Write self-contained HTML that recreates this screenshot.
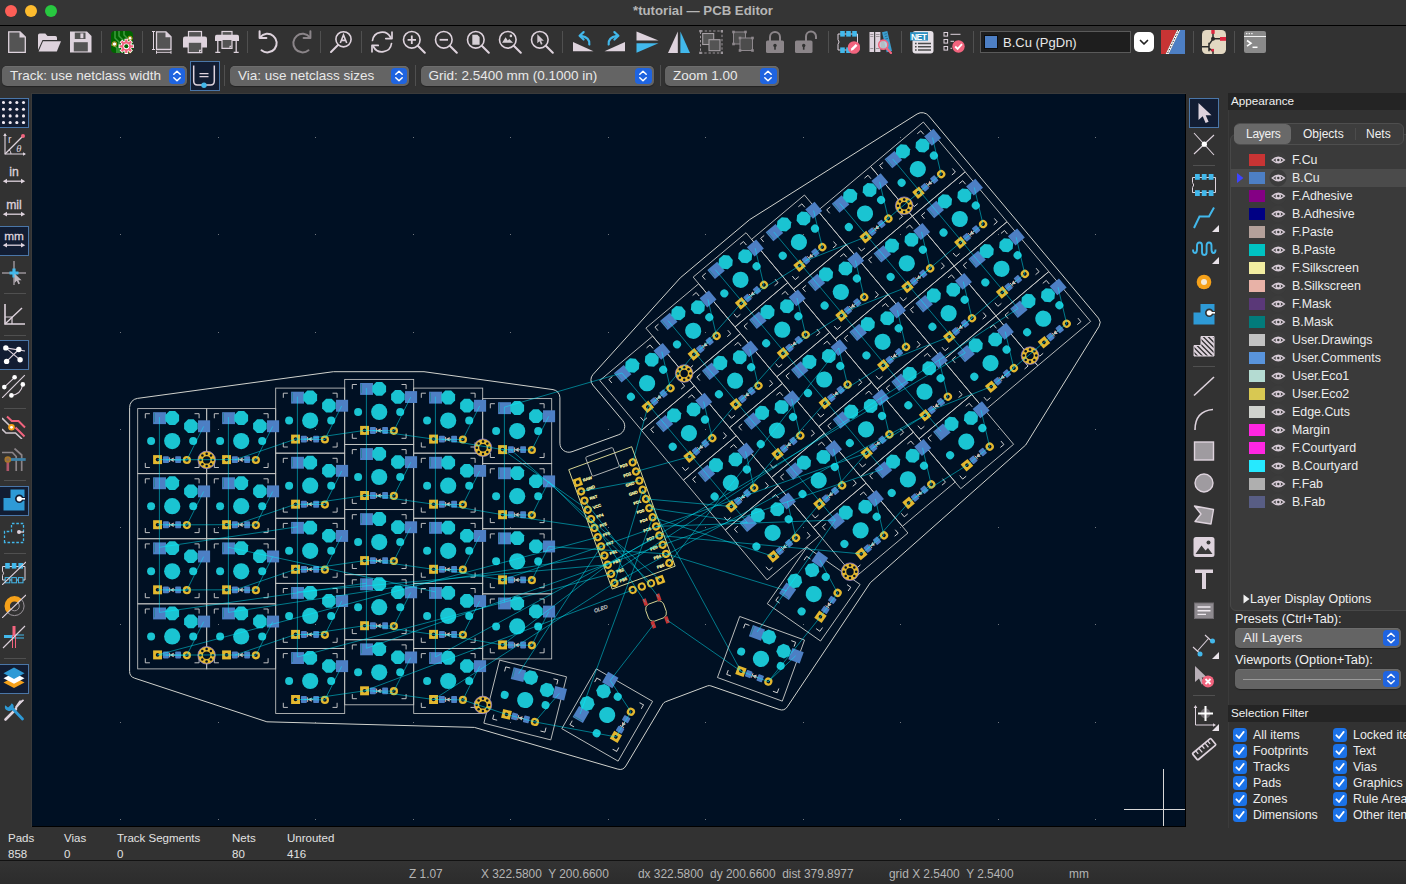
<!DOCTYPE html><html><head><meta charset="utf-8"><title>tutorial - PCB Editor</title><style>
*{box-sizing:border-box}
html,body{margin:0;padding:0}
body{width:1406px;height:884px;position:relative;overflow:hidden;background:#323232;font-family:"Liberation Sans",sans-serif;font-size:13px;color:#e4e4e4}
.abs,.ic,.vsep,.hsep,.selbox,.combo,.t{position:absolute}
.t{white-space:nowrap;line-height:1}
.vsep{width:1px;background:#505050}
.hsep{height:1px;background:#505050}
.selbox{background:#121d33;border:1.2px solid #4a76a8}
#title{left:0;top:0;width:1406px;height:26px;background:#353535;border-bottom:1.3px solid #000}
.tl{position:absolute;top:5px;width:12px;height:12px;border-radius:6px}
.combo{height:20px;border-radius:5px;background:#646464;box-shadow:0 .5px 0 #777 inset,0 .5px 1px #222;color:#e9e9e9;font-size:13.5px;line-height:20px;padding-left:8px;white-space:nowrap;overflow:hidden}
.step{position:absolute;right:2px;top:2px;width:16.2px;height:16px;border-radius:3.8px;background:#1f64e0}
.row{position:absolute;left:1231px;width:175px;height:18px}
.sw{position:absolute;left:17.6px;top:3.2px;width:16.5px;height:11.7px}
.ln{position:absolute;left:61px;top:2.5px;font-size:12.4px;line-height:13px;white-space:nowrap;color:#ececec}
.cb{position:absolute;width:14px;height:14px;border-radius:3.5px;background:#1b72e8}
.cl{position:absolute;font-size:12.4px;line-height:13px;white-space:nowrap;color:#ececec}
.hdr{position:absolute;left:1228px;width:178px;height:17px;background:#242424;color:#f0f0f0;font-size:11.7px;line-height:15.4px;padding-left:3px}
.st{position:absolute;font-size:11.5px;line-height:12px;color:#e2e2e2;white-space:nowrap}
.sb{position:absolute;font-size:11.9px;line-height:12px;color:#b4b4b4;white-space:pre;top:868px}
</style></head><body><div id="title" class="abs"><span class="tl" style="left:5px;background:#fe5f57"></span><span class="tl" style="left:25px;background:#febc2e"></span><span class="tl" style="left:45px;background:#28c840"></span><div class="t" style="left:0;width:1406px;text-align:center;top:4px;font-size:13.2px;font-weight:bold;color:#b6b6b6">*tutorial — PCB Editor</div></div><svg class="ic" style="left:5px;top:30px" width="24" height="24" viewBox="0 0 24 24"><path d="M3.7,1.8H15L20.3,7V22.3H3.7Z" fill="#545454" stroke="#ded3dd" stroke-width="1.3"/><path d="M14.5,1.8V7.5H20.3Z" fill="#ded3dd"/></svg><svg class="ic" style="left:36.8px;top:30px" width="24" height="24" viewBox="0 0 24 24"><path d="M1,20V5.2Q1,3.5 2.7,3.5H8.3L10.5,6H18.3Q20,6 20,7.7V10H5.5Z" fill="#ded3dd"/><path d="M6,11.2H24L19.8,21.5H1.6Z" fill="#ded3dd"/></svg><svg class="ic" style="left:68.8px;top:30px" width="24" height="24" viewBox="0 0 24 24"><path d="M1,1.5H18L22.5,6V22.5H1Z" fill="#ded3dd"/><rect x="5.8" y="2.6" width="10.7" height="6.4" fill="#545454"/><rect x="11.4" y="3.4" width="3" height="4.8" fill="#ded3dd"/><rect x="4.8" y="12.2" width="14" height="9.2" fill="#545454"/></svg><div class="vsep" style="left:101.0px;top:31px;height:22px"></div><svg class="ic" style="left:110.4px;top:30px" width="24" height="24" viewBox="0 0 24 24"><rect x="1" y="1" width="22" height="22" rx="4" fill="#006400"/><path d="M5,1V8L9,12V23M9,1V6L13,10V13M14,1V5L17,8M1,15H4L7,18V23" stroke="#3f9a3f" stroke-width="1.5" fill="none"/><circle cx="4.5" cy="14" r="1.7" fill="#fff"/><circle cx="4.5" cy="14" r="2.3" fill="none" stroke="#f0a030" stroke-width=".8"/><circle cx="20" cy="8.3" r="1.5" fill="#fff"/><circle cx="20" cy="8.3" r="2.1" fill="none" stroke="#f0a030" stroke-width=".8"/><circle cx="20" cy="22" r="1.3" fill="#f0a030"/><g transform="translate(16.3,16.3)"><path d="M0,-7.6V7.6M-7.6,0H7.6M-5.4,-5.4L5.4,5.4M-5.4,5.4L5.4,-5.4" stroke="#fff" stroke-width="3.6"/><circle r="5.6" fill="#fff"/><path d="M0,-6.8V6.8M-6.8,0H6.8M-4.8,-4.8L4.8,4.8M-4.8,4.8L4.8,-4.8" stroke="#f2647e" stroke-width="2.3"/><circle r="4.7" fill="#f2647e"/><circle r="2.9" fill="#fff"/><circle r="2" fill="#006400"/></g></svg><div class="vsep" style="left:142.0px;top:31px;height:22px"></div><svg class="ic" style="left:150px;top:30px" width="24" height="24" viewBox="0 0 24 24"><path d="M6.5,1.8H16L21,6.8V19.5H6.5Z" fill="#545454" stroke="#ded3dd" stroke-width="1.3"/><path d="M15.5,1.8V7.3H21Z" fill="#ded3dd"/><path d="M3.5,1.5V19.5M2,1.5H5M2,19.5H5M6.5,22.3H21M6.5,20.8V23.8M21,20.8V23.8" stroke="#ded3dd" stroke-width="1" fill="none"/></svg><svg class="ic" style="left:183px;top:30px" width="24" height="24" viewBox="0 0 24 24"><rect x="5.5" y="1.5" width="13" height="7" fill="#545454" stroke="#ded3dd" stroke-width="1.2"/><path d="M0,8.5Q0,6.5 2,6.5H22Q24,6.5 24,8.5V17.5H0Z" fill="#ded3dd"/><path d="M5.2,12.2H18.8V22.6H16L15.5,22.6H5.2Z" fill="#545454" stroke="#ded3dd" stroke-width="1.2"/><path d="M16,22.6V19.8H18.8Z" fill="#ded3dd"/></svg><svg class="ic" style="left:215px;top:30px" width="24" height="24" viewBox="0 0 24 24"><rect x="7" y="1.5" width="10" height="4.5" fill="#545454" stroke="#ded3dd" stroke-width="1.2"/><path d="M0,6.5Q0,4.8 1.7,4.8H22.3Q24,4.8 24,6.5V11H0Z" fill="#ded3dd"/><path d="M2.8,11V22.3M21.2,11V22.3M.3,22.3H5.3M18.7,22.3H23.7" stroke="#ded3dd" stroke-width="1.3" fill="none"/><path d="M7,9.5H17V18.3H14.7L14,18.3H7Z" fill="#545454" stroke="#ded3dd" stroke-width="1.2"/><path d="M14.5,18.3V15.8H17Z" fill="#ded3dd"/></svg><div class="vsep" style="left:247.0px;top:31px;height:22px"></div><svg class="ic" style="left:255.5px;top:30px" width="24" height="24" viewBox="0 0 24 24"><path d="M4.2,7.2A9.3,9.3 0 1 1 5.5,20.3" fill="none" stroke="#ded3dd" stroke-width="2" stroke-linecap="round"/><path d="M3.6,1.2V8H10.4" fill="none" stroke="#ded3dd" stroke-width="2" stroke-linecap="round" stroke-linejoin="round"/></svg><svg class="ic" style="left:289.7px;top:30px" width="24" height="24" viewBox="0 0 24 24"><path d="M19.8,7.2A9.3,9.3 0 1 0 18.5,20.3" fill="none" stroke="#8b8589" stroke-width="2" stroke-linecap="round"/><path d="M20.4,1.2V8H13.6" fill="none" stroke="#8b8589" stroke-width="2" stroke-linecap="round" stroke-linejoin="round"/></svg><div class="vsep" style="left:320.0px;top:31px;height:22px"></div><svg class="ic" style="left:328.6px;top:30px" width="24" height="24" viewBox="0 0 24 24"><circle cx="14.5" cy="9.3" r="7.6" fill="none" stroke="#ded3dd" stroke-width="1.6"/><path d="M9,15L2,22" stroke="#ded3dd" stroke-width="2" stroke-linecap="round"/><path d="M11.3,13L14.5,5L17.7,13M12.4,10.4H16.6" fill="none" stroke="#ded3dd" stroke-width="1.6"/></svg><div class="vsep" style="left:360.7px;top:31px;height:22px"></div><svg class="ic" style="left:369.8px;top:30px" width="24" height="24" viewBox="0 0 24 24"><path d="M2.5,10.5A9.6,9.6 0 0 1 20.6,7.5M21.5,13.5A9.6,9.6 0 0 1 3.4,16.5" fill="none" stroke="#ded3dd" stroke-width="1.7" stroke-linecap="round"/><path d="M22,2.2V8.6H15.8M2,21.8V15.4H8.2" fill="none" stroke="#ded3dd" stroke-width="1.7" stroke-linecap="round" stroke-linejoin="round"/></svg><svg class="ic" style="left:401.9px;top:30px" width="24" height="24" viewBox="0 0 24 24"><circle cx="9.8" cy="9.8" r="8.3" fill="none" stroke="#ded3dd" stroke-width="1.6"/><path d="M15.8,15.8 L22.8,22.8" stroke="#ded3dd" stroke-width="2" stroke-linecap="round"/><g transform="translate(.3,.3)"><path d="M5.3,9.5H13.7M9.5,5.3V13.7" stroke="#ded3dd" stroke-width="1.8"/></g></svg><svg class="ic" style="left:433.7px;top:30px" width="24" height="24" viewBox="0 0 24 24"><circle cx="9.8" cy="9.8" r="8.3" fill="none" stroke="#ded3dd" stroke-width="1.6"/><path d="M15.8,15.8 L22.8,22.8" stroke="#ded3dd" stroke-width="2" stroke-linecap="round"/><g transform="translate(.3,.3)"><path d="M5.3,9.5H13.7" stroke="#ded3dd" stroke-width="1.8"/></g></svg><svg class="ic" style="left:465.8px;top:30px" width="24" height="24" viewBox="0 0 24 24"><circle cx="9.8" cy="9.8" r="8.3" fill="none" stroke="#ded3dd" stroke-width="1.6"/><path d="M15.8,15.8 L22.8,22.8" stroke="#ded3dd" stroke-width="2" stroke-linecap="round"/><g transform="translate(.3,.3)"><path d="M6,4.5H11L13.3,6.8V14.5H6Z" fill="#d6d0d6"/></g></svg><svg class="ic" style="left:497.8px;top:30px" width="24" height="24" viewBox="0 0 24 24"><circle cx="9.8" cy="9.8" r="8.3" fill="none" stroke="#ded3dd" stroke-width="1.6"/><path d="M15.8,15.8 L22.8,22.8" stroke="#ded3dd" stroke-width="2" stroke-linecap="round"/><g transform="translate(.3,.3)"><path d="M3.8,12.5L7.3,7L9.5,10.3L11,8.6L14.8,12.5Z" fill="#d6d0d6"/><circle cx="12.6" cy="5.6" r="1.3" fill="#d6d0d6"/></g></svg><svg class="ic" style="left:529.9px;top:30px" width="24" height="24" viewBox="0 0 24 24"><circle cx="9.8" cy="9.8" r="8.3" fill="none" stroke="#ded3dd" stroke-width="1.6"/><path d="M15.8,15.8 L22.8,22.8" stroke="#ded3dd" stroke-width="2" stroke-linecap="round"/><g transform="translate(.3,.3)"><path d="M7,4V13L9.2,11L10.7,14.4L12.2,13.7L10.8,10.5H13.6Z" fill="#cfc6ce"/></g></svg><div class="vsep" style="left:562.1px;top:31px;height:22px"></div><svg class="ic" style="left:570.6px;top:30px" width="24" height="24" viewBox="0 0 24 24"><path d="M2,12V21.3H22.5Z" fill="#ded3dd"/><path d="M18.3,14.5Q19.3,7.5 10,5.8" fill="none" stroke="#42b8eb" stroke-width="2.2" stroke-linecap="round"/><path d="M12.6,2.1L8.6,5.7L12.6,9.5" fill="none" stroke="#42b8eb" stroke-width="2.2" stroke-linecap="round" stroke-linejoin="round"/></svg><svg class="ic" style="left:603.2px;top:30px" width="24" height="24" viewBox="0 0 24 24"><path d="M22,12V21.3H1.5Z" fill="#ded3dd"/><path d="M5.7,14.5Q4.7,7.5 14,5.8" fill="none" stroke="#42b8eb" stroke-width="2.2" stroke-linecap="round"/><path d="M11.4,2.1L15.4,5.7L11.4,9.5" fill="none" stroke="#42b8eb" stroke-width="2.2" stroke-linecap="round" stroke-linejoin="round"/></svg><svg class="ic" style="left:634.9px;top:30px" width="24" height="24" viewBox="0 0 24 24"><path d="M1.5,1.5L23.5,10.6H1.5Z" fill="#ded3dd"/><path d="M1.5,22.7L23.5,13.2H1.5Z" fill="#42b8eb"/></svg><svg class="ic" style="left:667px;top:30px" width="24" height="24" viewBox="0 0 24 24"><path d="M10.8,1.5V23H1Z" fill="#ded3dd"/><path d="M13.4,1.5V23H23Z" fill="#42b8eb"/></svg><svg class="ic" style="left:699.3px;top:30px" width="24" height="24" viewBox="0 0 24 24"><rect x="1.5" y="1" width="21.5" height="22" fill="none" stroke="#9a9499" stroke-width="1" stroke-dasharray="2.4 1.8"/><rect x="0.19999999999999996" y="-0.30000000000000004" width="2.6" height="2.6" fill="#9a9499"/><rect x="21.7" y="-0.30000000000000004" width="2.6" height="2.6" fill="#9a9499"/><rect x="0.19999999999999996" y="21.7" width="2.6" height="2.6" fill="#9a9499"/><rect x="21.7" y="21.7" width="2.6" height="2.6" fill="#9a9499"/><rect x="3.7" y="3.5" width="11" height="11" fill="#545454" stroke="#a59fa4" stroke-width="1.1"/><rect x="10" y="9.7" width="11" height="11" fill="#545454" stroke="#a59fa4" stroke-width="1.1"/></svg><svg class="ic" style="left:731.4px;top:30px" width="24" height="24" viewBox="0 0 24 24"><rect x="2.5" y="2" width="12" height="12" fill="#4c4c4c" stroke="#8e888d" stroke-width="1"/><rect x="1.2" y="0.7" width="2.6" height="2.6" fill="#8e888d"/><rect x="13.2" y="0.7" width="2.6" height="2.6" fill="#8e888d"/><rect x="1.2" y="12.7" width="2.6" height="2.6" fill="#8e888d"/><rect x="9" y="8" width="12.5" height="12.5" fill="#4c4c4c" stroke="#8e888d" stroke-width="1"/><rect x="7.7" y="6.7" width="2.6" height="2.6" fill="#8e888d"/><rect x="20.2" y="6.7" width="2.6" height="2.6" fill="#8e888d"/><rect x="7.7" y="19.2" width="2.6" height="2.6" fill="#8e888d"/><rect x="20.2" y="19.2" width="2.6" height="2.6" fill="#8e888d"/></svg><svg class="ic" style="left:763.2px;top:30px" width="24" height="24" viewBox="0 0 24 24"><path d="M7,11V7A5,5 0 0 1 17,7V11" fill="none" stroke="#8b8589" stroke-width="2"/><rect x="3" y="10.5" width="18" height="12.5" rx="1.5" fill="#8b8589"/><circle cx="12" cy="15.5" r="1.7" fill="#323232"/><rect x="11.2" y="15.5" width="1.6" height="4.2" fill="#323232"/></svg><svg class="ic" style="left:795.3px;top:30px" width="24" height="24" viewBox="0 0 24 24"><path d="M11,11V6.5A5,5 0 0 1 21,6.5V9" fill="none" stroke="#8b8589" stroke-width="2"/><rect x="0" y="10.5" width="17.5" height="12.5" rx="1.5" fill="#8b8589"/><circle cx="8.7" cy="15.5" r="1.7" fill="#323232"/><rect x="7.9" y="15.5" width="1.6" height="4.2" fill="#323232"/></svg><div class="vsep" style="left:827.5px;top:31px;height:22px"></div><svg class="ic" style="left:836.1px;top:30px" width="24" height="24" viewBox="0 0 24 24"><path d="M2,4H21.5V20H2V14.3Q4.2,12 2,9.7Z" fill="none" stroke="#ded3dd" stroke-width="1"/><rect x="4.2" y="1" width="4.6" height="5.6" fill="#42b8eb"/><rect x="4.2" y="17.4" width="4.6" height="5.6" fill="#42b8eb"/><rect x="10.2" y="1" width="4.6" height="5.6" fill="#42b8eb"/><rect x="10.2" y="17.4" width="4.6" height="5.6" fill="#42b8eb"/><rect x="16.2" y="1" width="4.6" height="5.6" fill="#42b8eb"/><rect x="16.2" y="17.4" width="4.6" height="5.6" fill="#42b8eb"/><circle cx="18" cy="17.5" r="6.3" fill="#f2647e"/><path d="M14.8,20.7L15.4,18.3L19.7,14L21.5,15.8L17.2,20.1Z" fill="#fff"/></svg><svg class="ic" style="left:868px;top:30px" width="24" height="24" viewBox="0 0 24 24"><rect x="1.5" y="2" width="4.6" height="20" fill="#ded3dd"/><rect x="7.2" y="2" width="5.2" height="20" fill="#ded3dd"/><path d="M2.3,4.5H5.3M2.3,6.5H5.3M2.3,18.5H5.3M8,4.5H11.6M8,6.5H11.6M8,18.5H11.6" stroke="#8a8488" stroke-width=".8"/><path d="M14,2.3L19.3,1L24,21L18.7,22.3Z" fill="#3c9fd0"/><path d="M16.3,4.2L18.8,3.6M16.9,6.6L19.4,6M17.5,9L20,8.4" stroke="#2a6f95" stroke-width="1"/><circle cx="15.3" cy="14.7" r="4.6" fill="#c9d6de" fill-opacity=".85" stroke="#f2647e" stroke-width="1.6"/><path d="M18.7,18.3L23,23" stroke="#f2647e" stroke-width="2.2" stroke-linecap="round"/></svg><div class="vsep" style="left:900.9px;top:31px;height:22px"></div><svg class="ic" style="left:909.5px;top:30px" width="24" height="24" viewBox="0 0 24 24"><rect x="2.5" y="1" width="21" height="22.5" rx="3" fill="#e6e0e6"/><rect x="0" y="2.2" width="18" height="8.4" fill="#2e8fc0"/><text x="9" y="9.6" font-size="8.6" font-weight="bold" fill="#fff" text-anchor="middle" font-family="Liberation Sans,sans-serif" textLength="16">NET</text><path d="M8,13.5H21M8,16.7H21M8,19.9H21" stroke="#4a4a4a" stroke-width="1.5"/><path d="M5,13.5H6.6M5,16.7H6.6M5,19.9H6.6" stroke="#4a4a4a" stroke-width="1.5"/></svg><svg class="ic" style="left:942px;top:30px" width="24" height="24" viewBox="0 0 24 24"><rect x="2" y="2.5" width="3.6" height="3.6" fill="none" stroke="#ded3dd" stroke-width="1"/><rect x="2" y="9.5" width="3.6" height="3.6" fill="none" stroke="#ded3dd" stroke-width="1"/><rect x="2" y="16.5" width="3.6" height="3.6" fill="none" stroke="#ded3dd" stroke-width="1"/><path d="M8.5,4.3H18.5M8.5,11.3H12M8.5,18.3H10" stroke="#ded3dd" stroke-width="1"/><circle cx="16.5" cy="16.5" r="6.2" fill="#f2647e"/><path d="M13.2,16.5L15.6,18.9L20,14.2" fill="none" stroke="#fff" stroke-width="1.8"/></svg><div class="vsep" style="left:973.0px;top:31px;height:22px"></div><svg class="ic" style="left:1161px;top:30px" width="24" height="24" viewBox="0 0 24 24"><path d="M0,0H16.2L4.7,24H0Z" fill="#c83434"/><path d="M19.2,0H24V24H7.7Z" fill="#4d7fc4"/><path d="M16.2,0H19.2L7.7,24H4.7Z" fill="#fff"/><path d="M17.7,0L6.2,24" stroke="#222" stroke-width="1" stroke-dasharray="1.6 1.4"/></svg><div class="vsep" style="left:1193.0px;top:31px;height:22px"></div><svg class="ic" style="left:1202px;top:30px" width="24" height="24" viewBox="0 0 24 24"><rect x="0" y="0" width="24" height="24" rx="4.5" fill="#e3d8c2"/><path d="M11,0V8.8H24M11,8.8L7.3,14.2M7,12.8V21.2M0,16.7H7M7,18.4L11,21V24" stroke="#2a2a2a" stroke-width="1.5" fill="none"/><circle cx="11" cy="8.8" r="2" fill="#2a2a2a"/><rect x="9.3" y="0" width="3.4" height="3.8" fill="#dc2740"/><rect x="18" y="7" width="6" height="3.8" fill="#dc2740"/><rect x="9.4" y="18.9" width="2.6" height="2.6" fill="#dc2740"/></svg><div class="vsep" style="left:1234.2px;top:31px;height:22px"></div><svg class="ic" style="left:1243px;top:30px" width="24" height="24" viewBox="0 0 24 24"><rect x="1" y="1" width="22" height="22" rx="2" fill="#8a8a8a"/><path d="M1,6.5H23" stroke="#fff" stroke-width=".9"/><path d="M3,3.6H4.4M5.6,3.6H7M8.2,3.6H9.6M3.7,2.9V4.3M6.3,2.9V4.3M8.9,2.9V4.3" stroke="#fff" stroke-width=".7"/><path d="M4,10.5L8,13.3L4,16.1" fill="none" stroke="#fff" stroke-width="1.6"/><path d="M9.5,17.3H14.5" stroke="#fff" stroke-width="1.5"/></svg><div class="abs" style="left:979.5px;top:31px;width:151px;height:22px;background:#1e1e1e;border:1px solid #5a5a5a"></div><div class="abs" style="left:984px;top:35px;width:14px;height:14px;background:#4d7fc4;border:1px solid #0d0d0d"></div><div class="t" style="left:1003px;top:35.5px;font-size:13px;color:#e8e8e8">B.Cu (PgDn)</div><div class="abs" style="left:1134px;top:32px;width:20px;height:20px;border-radius:5px;background:#fff"></div><svg class="ic" style="left:1134px;top:32px" width="20" height="20" viewBox="0 0 20 20"><path d="M6.5,8.5L10,12L13.5,8.5" fill="none" stroke="#222" stroke-width="1.7" stroke-linecap="round" stroke-linejoin="round"/></svg><div class="combo" style="left:2px;top:66px;width:184.8px;">Track: use netclass width<span class="step"><svg width="16" height="16" viewBox="0 0 16 16" style="position:absolute;left:0;top:0"><path d="M4.8,6.3L8,3.2L11.2,6.3M4.8,9.7L8,12.8L11.2,9.7" fill="none" stroke="#fff" stroke-width="1.5" stroke-linecap="round" stroke-linejoin="round"/></svg></span></div><div class="selbox" style="left:189.5px;top:61px;width:30px;height:30px"></div><svg class="ic" style="left:192px;top:63.5px" width="24" height="24" viewBox="0 0 24 24"><path d="M1.7,1.5V17Q1.7,21 5.5,21H18.5Q22.3,21 22.3,17V1.5" fill="none" stroke="#ded3dd" stroke-width="1.5"/><path d="M7.5,9.6H16.5M7.5,12.6H16.5" stroke="#ded3dd" stroke-width="1.1"/><circle cx="12" cy="21.3" r="2.7" fill="#42b8eb"/></svg><div class="vsep" style="left:224px;top:65px;height:21px"></div><div class="combo" style="left:230px;top:66px;width:179px;">Via: use netclass sizes<span class="step"><svg width="16" height="16" viewBox="0 0 16 16" style="position:absolute;left:0;top:0"><path d="M4.8,6.3L8,3.2L11.2,6.3M4.8,9.7L8,12.8L11.2,9.7" fill="none" stroke="#fff" stroke-width="1.5" stroke-linecap="round" stroke-linejoin="round"/></svg></span></div><div class="vsep" style="left:414.5px;top:65px;height:21px"></div><div class="combo" style="left:420.5px;top:66px;width:233px;">Grid: 2.5400 mm (0.1000 in)<span class="step"><svg width="16" height="16" viewBox="0 0 16 16" style="position:absolute;left:0;top:0"><path d="M4.8,6.3L8,3.2L11.2,6.3M4.8,9.7L8,12.8L11.2,9.7" fill="none" stroke="#fff" stroke-width="1.5" stroke-linecap="round" stroke-linejoin="round"/></svg></span></div><div class="vsep" style="left:659.5px;top:65px;height:21px"></div><div class="combo" style="left:665px;top:66px;width:113.5px;">Zoom 1.00<span class="step"><svg width="16" height="16" viewBox="0 0 16 16" style="position:absolute;left:0;top:0"><path d="M4.8,6.3L8,3.2L11.2,6.3M4.8,9.7L8,12.8L11.2,9.7" fill="none" stroke="#fff" stroke-width="1.5" stroke-linecap="round" stroke-linejoin="round"/></svg></span></div><div class="selbox" style="left:-1px;top:97.9px;width:30px;height:30px"></div><svg class="ic" style="left:1.8px;top:100.1px" width="24" height="24" viewBox="0 0 24 24"><circle cx="1.5" cy="2.5" r="1.55" fill="#efe8ef"/><circle cx="1.5" cy="9.2" r="1.55" fill="#efe8ef"/><circle cx="1.5" cy="15.9" r="1.55" fill="#efe8ef"/><circle cx="1.5" cy="22.6" r="1.55" fill="#efe8ef"/><circle cx="8.17" cy="2.5" r="1.55" fill="#efe8ef"/><circle cx="8.17" cy="9.2" r="1.55" fill="#efe8ef"/><circle cx="8.17" cy="15.9" r="1.55" fill="#efe8ef"/><circle cx="8.17" cy="22.6" r="1.55" fill="#efe8ef"/><circle cx="14.84" cy="2.5" r="1.55" fill="#efe8ef"/><circle cx="14.84" cy="9.2" r="1.55" fill="#efe8ef"/><circle cx="14.84" cy="15.9" r="1.55" fill="#efe8ef"/><circle cx="14.84" cy="22.6" r="1.55" fill="#efe8ef"/><circle cx="21.509999999999998" cy="2.5" r="1.55" fill="#efe8ef"/><circle cx="21.509999999999998" cy="9.2" r="1.55" fill="#efe8ef"/><circle cx="21.509999999999998" cy="15.9" r="1.55" fill="#efe8ef"/><circle cx="21.509999999999998" cy="22.6" r="1.55" fill="#efe8ef"/></svg><svg class="ic" style="left:1.8px;top:133.2px" width="24" height="24" viewBox="0 0 24 24"><path d="M3,1V21H23" fill="none" stroke="#ded3dd" stroke-width="1.1"/><path d="M3,0L1.2,3H4.8ZM24,21L21,19.2V22.8Z" fill="#ded3dd"/><path d="M3,21L20.5,3.5" stroke="#ded3dd" stroke-width="1.2"/><path d="M9,21A6,6 0 0 0 7.3,16.8" fill="none" stroke="#ded3dd" stroke-width="1"/><circle cx="21" cy="3" r="2" fill="#f2647e"/><text x="6" y="9.5" font-size="10.5" fill="#ded3dd" font-family="Liberation Sans,sans-serif">r</text><text x="14.2" y="18.8" font-size="10.5" font-style="italic" fill="#ded3dd" font-family="Liberation Serif,serif">θ</text></svg><svg class="ic" style="left:1.8px;top:164.4px" width="24" height="24" viewBox="0 0 24 24"><text x="12" y="12.3" font-size="12.2" fill="#ded3dd" stroke="#ded3dd" stroke-width=".3" text-anchor="middle" font-family="Liberation Sans,sans-serif">in</text><path d="M3,17.2H21" stroke="#ded3dd" stroke-width="1.3"/><path d="M.8,17.2L5,14.8V19.6ZM23.2,17.2L19,14.8V19.6Z" fill="#ded3dd"/></svg><svg class="ic" style="left:1.8px;top:197.0px" width="24" height="24" viewBox="0 0 24 24"><text x="12" y="12.3" font-size="12.2" fill="#ded3dd" stroke="#ded3dd" stroke-width=".3" text-anchor="middle" font-family="Liberation Sans,sans-serif">mil</text><path d="M3,17.2H21" stroke="#ded3dd" stroke-width="1.3"/><path d="M.8,17.2L5,14.8V19.6ZM23.2,17.2L19,14.8V19.6Z" fill="#ded3dd"/></svg><div class="selbox" style="left:-1px;top:226.0px;width:30px;height:30px"></div><svg class="ic" style="left:1.8px;top:228.2px" width="24" height="24" viewBox="0 0 24 24"><text x="12" y="12.3" font-size="11.8" fill="#ded3dd" stroke="#ded3dd" stroke-width=".3" text-anchor="middle" font-family="Liberation Sans,sans-serif">mm</text><path d="M3,17.2H21" stroke="#ded3dd" stroke-width="1.3"/><path d="M.8,17.2L5,14.8V19.6ZM23.2,17.2L19,14.8V19.6Z" fill="#ded3dd"/></svg><svg class="ic" style="left:1.8px;top:260.8px" width="24" height="24" viewBox="0 0 24 24"><path d="M12,0V24M0,12H24" stroke="#ded3dd" stroke-width=".9"/><path d="M12,7.5V16.5M7.5,12H16.5" stroke="#42b8eb" stroke-width="3.2"/><path d="M12.5,12.5V22L14.8,19.8L16.4,23.3L18,22.5L16.4,19.2H19.6Z" fill="#bdb5bc"/></svg><div class="hsep" style="left:4px;top:293.1px;width:22px"></div><svg class="ic" style="left:1.8px;top:302.9px" width="24" height="24" viewBox="0 0 24 24"><path d="M3,1V21H23" fill="none" stroke="#ded3dd" stroke-width="1.6"/><path d="M3,21L20,5" stroke="#ded3dd" stroke-width="1.4"/><path d="M3,14H10V21" fill="none" stroke="#ded3dd" stroke-width="1.2"/></svg><div class="hsep" style="left:4px;top:335.0px;width:22px"></div><div class="selbox" style="left:-1px;top:340.2px;width:30px;height:30px"></div><svg class="ic" style="left:1.8px;top:342.4px" width="24" height="24" viewBox="0 0 24 24"><path d="M3.8,5.9L18.1,17.8M4.6,19.4L16.8,7.5M3.8,5.9L23,9" stroke="#ded3dd" stroke-width="1.1"/><circle cx="3.8" cy="5.9" r="2.7" fill="#fff"/><circle cx="4.6" cy="19.4" r="2.7" fill="#fff"/><circle cx="16.8" cy="7.5" r="2.7" fill="#fff"/><circle cx="18.1" cy="17.8" r="2.7" fill="#fff"/></svg><svg class="ic" style="left:1.8px;top:374.0px" width="24" height="24" viewBox="0 0 24 24"><path d="M0,24L22.8,1.2" stroke="#ded3dd" stroke-width="1.1"/><path d="M2.3,13.1L12.6,3.3" stroke="#ded3dd" stroke-width="1.1"/><path d="M9.4,21.4Q19,20.5 20.8,10.4" fill="none" stroke="#ded3dd" stroke-width="1.1"/><circle cx="2.3" cy="13.1" r="2.3" fill="#fff"/><circle cx="12.6" cy="3.3" r="2.3" fill="#fff"/><circle cx="9.4" cy="21.4" r="2.3" fill="#fff"/><circle cx="20.8" cy="10.4" r="2.3" fill="#fff"/></svg><div class="hsep" style="left:4px;top:407.5px;width:22px"></div><svg class="ic" style="left:1.8px;top:414.8px" width="24" height="24" viewBox="0 0 24 24"><path d="M5,1.5L9.8,6H16.5L23,12.5M13.5,12.5L22.5,21.5" stroke="#f2647e" stroke-width="2" fill="none"/><path d="M0,3L7.5,10.5M0,14L4,18H13.5L20,24" stroke="#cfc7ce" stroke-width="1.6" fill="none"/><circle cx="9.5" cy="12.3" r="3.3" fill="#f5a11a"/><circle cx="9.5" cy="12.3" r="1.4" fill="#fff"/></svg><svg class="ic" style="left:1.8px;top:448.3px" width="24" height="24" viewBox="0 0 24 24"><path d="M0,4.5H10.5L14.2,8.5V23M12.5,.5L19.7,7V23" stroke="#8b8589" stroke-width="1.7" fill="none"/><path d="M8,11.5H23.7" stroke="#3d82a8" stroke-width="2.8"/><path d="M5.8,13V23" stroke="#b0566a" stroke-width="2.6"/><circle cx="5.8" cy="11.5" r="3.3" fill="#a8772a"/><circle cx="5.8" cy="11.5" r="1.6" fill="#8a6a55"/></svg><div class="hsep" style="left:4px;top:479.8px;width:22px"></div><div class="selbox" style="left:-1px;top:485.8px;width:30px;height:30px"></div><svg class="ic" style="left:1.8px;top:488.0px" width="24" height="24" viewBox="0 0 24 24"><path d="M1.5,22.5V10H8.5V1.5H22.5V22.5Z" fill="#2e9ad6"/><circle cx="17.3" cy="10.8" r="4.3" fill="#121d33"/><path d="M17,10.8H23" stroke="#121d33" stroke-width="3.6"/><circle cx="17.3" cy="10.8" r="2.6" fill="#fff"/><path d="M17.3,10.8H23" stroke="#fff" stroke-width="1.6"/></svg><svg class="ic" style="left:1.8px;top:520.6px" width="24" height="24" viewBox="0 0 24 24"><path d="M2.5,21.5V10.5H9.5V2.5H21.5V21.5Z" fill="none" stroke="#42b8eb" stroke-width="1.3" stroke-dasharray="2.6 1.8"/><circle cx="17" cy="11" r="2" fill="#ded3dd"/><path d="M17,11H22" stroke="#ded3dd" stroke-width="1.3"/></svg><div class="hsep" style="left:4px;top:553.0px;width:22px"></div><svg class="ic" style="left:1.8px;top:561.2px" width="24" height="24" viewBox="0 0 24 24"><path d="M.5,5.5H23V19H.5V14.5Q2.8,12.3 .5,10Z" fill="none" stroke="#ded3dd" stroke-width="1"/><rect x="3.2" y="2" width="4.6" height="5.6" fill="#42b8eb"/><rect x="3.2" y="16.6" width="4.6" height="5.2" fill="#323232" stroke="#42b8eb" stroke-width="1"/><rect x="9.8" y="2" width="4.6" height="5.6" fill="#42b8eb"/><rect x="9.8" y="16.6" width="4.6" height="5.2" fill="#323232" stroke="#42b8eb" stroke-width="1"/><rect x="16.4" y="2" width="4.6" height="5.6" fill="#42b8eb"/><rect x="16.4" y="16.6" width="4.6" height="5.2" fill="#323232" stroke="#42b8eb" stroke-width="1"/><path d="M0,24L24,1" stroke="#ded3dd" stroke-width="1.1"/></svg><svg class="ic" style="left:1.8px;top:593.5px" width="24" height="24" viewBox="0 0 24 24"><clipPath id="vc1"><path d="M-2,26L26,-1H-2Z"/></clipPath><clipPath id="vc2"><path d="M-2,26L26,-1V26Z"/></clipPath><circle cx="12.5" cy="12" r="7.3" fill="none" stroke="#f5a11a" stroke-width="5.4" clip-path="url(#vc1)"/><g clip-path="url(#vc2)" fill="none" stroke="#9a949a" stroke-width="1"><circle cx="12.5" cy="12" r="9.6"/><circle cx="12.5" cy="12" r="4.8"/></g><path d="M0,24L24,1" stroke="#ded3dd" stroke-width="1.1"/></svg><svg class="ic" style="left:1.8px;top:625.3px" width="24" height="24" viewBox="0 0 24 24"><path d="M2,11.5H11" stroke="#42b8eb" stroke-width="3"/><path d="M11,10H22M11,13H22" stroke="#42b8eb" stroke-width="1"/><path d="M12,1V11" stroke="#f2647e" stroke-width="3"/><path d="M10.5,11V23M13.5,11V23" stroke="#f2647e" stroke-width="1"/><path d="M1,23L23,1" stroke="#ded3dd" stroke-width="1.1"/></svg><div class="hsep" style="left:4px;top:657.5px;width:22px"></div><div class="selbox" style="left:-1px;top:663.6px;width:30px;height:30px"></div><svg class="ic" style="left:1.8px;top:665.8px" width="24" height="24" viewBox="0 0 24 24"><path d="M12,11L22.5,16.5L12,22L1.5,16.5Z" fill="#f5a11a"/><path d="M12,6.7L22.5,12.2L12,17.7L1.5,12.2Z" fill="#fff"/><path d="M12,1.5L22.5,7.3L12,13.1L1.5,7.3Z" fill="#2e9ad6"/></svg><svg class="ic" style="left:1.8px;top:698.1px" width="24" height="24" viewBox="0 0 24 24"><path d="M3.5,21.5L14,11" stroke="#ded3dd" stroke-width="2.6" stroke-linecap="round"/><path d="M17.5,2.5L21.5,2.5L14.5,10.5L12.8,9.2Z" fill="#ded3dd"/><path d="M16.5,6.5L21.5,1.8" stroke="#ded3dd" stroke-width="1.6"/><path d="M20.5,21L10,10" stroke="#2e9ad6" stroke-width="2.8" stroke-linecap="round"/><path d="M9.8,5.2A4.3,4.3 0 1 1 3.2,7.2L6,9.6L8.3,7.6Z" fill="#2e9ad6"/></svg><div class="abs" style="left:31px;top:93px;width:1155.2px;height:734px;background:#3a3a3a"></div><div class="abs" style="left:31.7px;top:93.8px;width:1154.3px;height:733.1px;background:#000;overflow:hidden"><div class="abs" style="left:-.7px;top:-.8px;width:1154px;height:732.9px;overflow:hidden"><svg id="pcb" width="1155" height="733" viewBox="31 93 1155 733"><style>.sl{font:4px "Liberation Sans",sans-serif;fill:#f2eda1;stroke:#f2eda1;stroke-width:.35}</style><defs><rect id="c" x="-34.5" y="-32.5" width="69" height="65" fill="none" stroke="#c4c6c4" stroke-width=".85"/><g id="k"><path d="M-26.9,-22.8 V-27.4 H-22.3 M22.3,-27.4 H26.9 V-22.8 M26.9,21.8 V26.4 H22.3 M-22.3,26.4 H-26.9 V21.8" fill="none" stroke="#d2d2d2" stroke-width=".9"/><g fill="#4d7fc4"><rect x="-19.1" y="-28.9" width="12.9" height="11.9"/><rect x="25.8" y="-20.8" width="12.1" height="11.9"/><rect x="-9.25" y="15.1" width="5.9" height="6.9" rx=".8"/><rect x="3" y="15.1" width="5.8" height="6.9" rx=".8"/></g><path d="M-17.7,-28 V-19" stroke="#1d7f86" stroke-width=".7" fill="none"/><g fill="#1ac4d2"><circle r="8.1"/><circle cx="-21.1" r="4"/><circle cx="21" r="4"/><polygon points="6.9,-20.2 2.9,-16.2 -2.9,-16.2 -6.9,-20.2 -6.9,-26 -2.9,-30 2.9,-30 6.9,-26"/><polygon points="25.5,-12.2 21.5,-8.2 15.9,-8.2 11.9,-12.2 11.9,-17.8 15.9,-21.8 21.5,-21.8 25.5,-17.8"/></g><path d="M-2.6,18.6L1.5,16.4V20.8Z" fill="#f2bcae"/><path d="M-2.6,16.3V20.9M1.5,18.6H3.1" stroke="#f2bcae" stroke-width=".9" fill="none"/><rect x="-19.1" y="14" width="8.9" height="9" fill="#e3b72e"/><circle cx="-14.65" cy="18.5" r="1.8" fill="#001023"/><circle cx="14.7" cy="18.9" r="2.95" fill="#001023" stroke="#e3b72e" stroke-width="2.3"/></g><g id="mh"><circle r="8.8" fill="#e3b72e" stroke="#9a86e0" stroke-width=".7"/><circle r="3.7" fill="#001023"/><circle cx="6.2" cy="0" r="1.25" fill="#001023"/><circle cx="4.3" cy="4.3" r="1.25" fill="#001023"/><circle cx="0" cy="6.2" r="1.25" fill="#001023"/><circle cx="-4.3" cy="4.3" r="1.25" fill="#001023"/><circle cx="-6.2" cy="0" r="1.25" fill="#001023"/><circle cx="-4.3" cy="-4.3" r="1.25" fill="#001023"/><circle cx="0" cy="-6.2" r="1.25" fill="#001023"/><circle cx="4.3" cy="-4.3" r="1.25" fill="#001023"/></g></defs><rect x="31" y="93" width="1155" height="733" fill="#001023"/><path d="M120,137.5h1M120,234.5h1M120,332.5h1M120,429.5h1M120,527.5h1M120,624.5h1M120,722.5h1M120,819.5h1M218,137.5h1M218,234.5h1M218,332.5h1M218,429.5h1M218,527.5h1M218,624.5h1M218,722.5h1M218,819.5h1M315,137.5h1M315,234.5h1M315,332.5h1M315,429.5h1M315,527.5h1M315,624.5h1M315,722.5h1M315,819.5h1M413,137.5h1M413,234.5h1M413,332.5h1M413,429.5h1M413,527.5h1M413,624.5h1M413,722.5h1M413,819.5h1M510,137.5h1M510,234.5h1M510,332.5h1M510,429.5h1M510,527.5h1M510,624.5h1M510,722.5h1M510,819.5h1M608,137.5h1M608,234.5h1M608,332.5h1M608,429.5h1M608,527.5h1M608,624.5h1M608,722.5h1M608,819.5h1M705,137.5h1M705,234.5h1M705,332.5h1M705,429.5h1M705,527.5h1M705,624.5h1M705,722.5h1M705,819.5h1M803,137.5h1M803,234.5h1M803,332.5h1M803,429.5h1M803,527.5h1M803,624.5h1M803,722.5h1M803,819.5h1M900,137.5h1M900,234.5h1M900,332.5h1M900,429.5h1M900,527.5h1M900,624.5h1M900,722.5h1M900,819.5h1M998,137.5h1M998,234.5h1M998,332.5h1M998,429.5h1M998,527.5h1M998,624.5h1M998,722.5h1M998,819.5h1M1095,137.5h1M1095,234.5h1M1095,332.5h1M1095,429.5h1M1095,527.5h1M1095,624.5h1M1095,722.5h1M1095,819.5h1" stroke="#70767e" stroke-width="1" fill="none"/><use href="#c" x="172.2" y="441.1"/><use href="#c" x="172.2" y="506.2"/><use href="#c" x="172.2" y="571.3"/><use href="#c" x="172.2" y="636.4"/><use href="#c" x="241.2" y="441.1"/><use href="#c" x="241.2" y="506.2"/><use href="#c" x="241.2" y="571.3"/><use href="#c" x="241.2" y="636.4"/><use href="#c" x="310.2" y="420.6"/><use href="#c" x="310.2" y="485.7"/><use href="#c" x="310.2" y="550.8"/><use href="#c" x="310.2" y="615.9"/><use href="#c" x="310.2" y="681"/><use href="#c" x="379.2" y="411.9"/><use href="#c" x="379.2" y="477"/><use href="#c" x="379.2" y="542.1"/><use href="#c" x="379.2" y="607.2"/><use href="#c" x="379.2" y="672.3"/><use href="#c" x="448.2" y="420.6"/><use href="#c" x="448.2" y="485.7"/><use href="#c" x="448.2" y="550.8"/><use href="#c" x="448.2" y="615.9"/><use href="#c" x="448.2" y="681"/><use href="#c" x="517.2" y="431.1"/><use href="#c" x="517.2" y="496.2"/><use href="#c" x="517.2" y="561.3"/><use href="#c" x="517.2" y="626.4"/><use href="#c" transform="translate(647.1,383.2) rotate(-40)"/><use href="#c" transform="translate(688.9,433.1) rotate(-40)"/><use href="#c" transform="translate(730.8,482.9) rotate(-40)"/><use href="#c" transform="translate(772.6,532.8) rotate(-40)"/><use href="#c" transform="translate(693.2,330.8) rotate(-40)"/><use href="#c" transform="translate(735.1,380.7) rotate(-40)"/><use href="#c" transform="translate(776.9,430.5) rotate(-40)"/><use href="#c" transform="translate(818.7,480.4) rotate(-40)"/><use href="#c" transform="translate(860.6,530.3) rotate(-40)"/><use href="#c" transform="translate(740.5,279.8) rotate(-40)"/><use href="#c" transform="translate(782.3,329.7) rotate(-40)"/><use href="#c" transform="translate(824.2,379.5) rotate(-40)"/><use href="#c" transform="translate(866,429.4) rotate(-40)"/><use href="#c" transform="translate(907.9,479.3) rotate(-40)"/><use href="#c" transform="translate(798.9,242.1) rotate(-40)"/><use href="#c" transform="translate(840.8,292) rotate(-40)"/><use href="#c" transform="translate(882.6,341.8) rotate(-40)"/><use href="#c" transform="translate(924.5,391.7) rotate(-40)"/><use href="#c" transform="translate(966.3,441.6) rotate(-40)"/><use href="#c" transform="translate(865,213.5) rotate(-40)"/><use href="#c" transform="translate(906.8,263.3) rotate(-40)"/><use href="#c" transform="translate(948.6,313.2) rotate(-40)"/><use href="#c" transform="translate(990.5,363.1) rotate(-40)"/><use href="#c" transform="translate(917.8,169.1) rotate(-40)"/><use href="#c" transform="translate(959.7,219) rotate(-40)"/><use href="#c" transform="translate(1001.5,268.8) rotate(-40)"/><use href="#c" transform="translate(1043.3,318.7) rotate(-40)"/><use href="#c" transform="translate(525.2,700) rotate(14)"/><use href="#c" transform="translate(607.2,715) rotate(-60)"/><use href="#c" transform="translate(761,658.8) rotate(20)"/><use href="#c" transform="translate(813.7,594.1) rotate(-55)"/><use href="#k" x="172.2" y="441.1"/><use href="#k" x="172.2" y="506.2"/><use href="#k" x="172.2" y="571.3"/><use href="#k" x="172.2" y="636.4"/><use href="#k" x="241.2" y="441.1"/><use href="#k" x="241.2" y="506.2"/><use href="#k" x="241.2" y="571.3"/><use href="#k" x="241.2" y="636.4"/><use href="#k" x="310.2" y="420.6"/><use href="#k" x="310.2" y="485.7"/><use href="#k" x="310.2" y="550.8"/><use href="#k" x="310.2" y="615.9"/><use href="#k" x="310.2" y="681"/><use href="#k" x="379.2" y="411.9"/><use href="#k" x="379.2" y="477"/><use href="#k" x="379.2" y="542.1"/><use href="#k" x="379.2" y="607.2"/><use href="#k" x="379.2" y="672.3"/><use href="#k" x="448.2" y="420.6"/><use href="#k" x="448.2" y="485.7"/><use href="#k" x="448.2" y="550.8"/><use href="#k" x="448.2" y="615.9"/><use href="#k" x="448.2" y="681"/><use href="#k" x="517.2" y="431.1"/><use href="#k" x="517.2" y="496.2"/><use href="#k" x="517.2" y="561.3"/><use href="#k" x="517.2" y="626.4"/><use href="#k" transform="translate(647.1,383.2) rotate(-40)"/><use href="#k" transform="translate(688.9,433.1) rotate(-40)"/><use href="#k" transform="translate(730.8,482.9) rotate(-40)"/><use href="#k" transform="translate(772.6,532.8) rotate(-40)"/><use href="#k" transform="translate(693.2,330.8) rotate(-40)"/><use href="#k" transform="translate(735.1,380.7) rotate(-40)"/><use href="#k" transform="translate(776.9,430.5) rotate(-40)"/><use href="#k" transform="translate(818.7,480.4) rotate(-40)"/><use href="#k" transform="translate(860.6,530.3) rotate(-40)"/><use href="#k" transform="translate(740.5,279.8) rotate(-40)"/><use href="#k" transform="translate(782.3,329.7) rotate(-40)"/><use href="#k" transform="translate(824.2,379.5) rotate(-40)"/><use href="#k" transform="translate(866,429.4) rotate(-40)"/><use href="#k" transform="translate(907.9,479.3) rotate(-40)"/><use href="#k" transform="translate(798.9,242.1) rotate(-40)"/><use href="#k" transform="translate(840.8,292) rotate(-40)"/><use href="#k" transform="translate(882.6,341.8) rotate(-40)"/><use href="#k" transform="translate(924.5,391.7) rotate(-40)"/><use href="#k" transform="translate(966.3,441.6) rotate(-40)"/><use href="#k" transform="translate(865,213.5) rotate(-40)"/><use href="#k" transform="translate(906.8,263.3) rotate(-40)"/><use href="#k" transform="translate(948.6,313.2) rotate(-40)"/><use href="#k" transform="translate(990.5,363.1) rotate(-40)"/><use href="#k" transform="translate(917.8,169.1) rotate(-40)"/><use href="#k" transform="translate(959.7,219) rotate(-40)"/><use href="#k" transform="translate(1001.5,268.8) rotate(-40)"/><use href="#k" transform="translate(1043.3,318.7) rotate(-40)"/><use href="#k" transform="translate(525.2,700) rotate(14)"/><use href="#k" transform="translate(607.2,715) rotate(-60)"/><use href="#k" transform="translate(761,658.8) rotate(20)"/><use href="#k" transform="translate(813.7,594.1) rotate(-55)"/><use href="#mh" x="206.7" y="459.9"/><use href="#mh" x="483" y="447.7"/><use href="#mh" x="206.6" y="655.3"/><use href="#mh" x="482.9" y="704.9"/><use href="#mh" x="684.2" y="373.5"/><use href="#mh" x="904.2" y="205.7"/><use href="#mh" x="1030" y="355.6"/><use href="#mh" x="850" y="571.7"/><path d="M559.9,397.6A8,8 0 0 0 553,389.6L424,371.7L333.4,371.7L137.4,398.4A9,9 0 0 0 129.6,407.4L129.6,671.4A7,7 0 0 0 134.4,678.1L266.9,721.8L474.4,727.4L617.8,769.1A7,7 0 0 0 625.8,766L662.9,703.9A5,5 0 0 1 665.4,701.8L707.5,685.9A5,5 0 0 1 710.9,685.9L779.2,709.5A7,7 0 0 0 787.3,706.8L870.3,582.7L1025.7,445L1099.1,326.3A7,7 0 0 0 1098.5,318.2L928.8,115.9A9,9 0 0 0 917.1,114L749.7,219.6L680.3,277.8L593,374.5A8,8 0 0 0 592.8,385L622.6,420.4A9,9 0 0 1 618.8,434.7L572,451.7A9,9 0 0 1 559.9,443.2Z" fill="none" stroke="#d0d2cd" stroke-width="1"/><g transform="translate(577.8,482.3) rotate(-20)"><rect x="-4.2" y="-15" width="67" height="127.1" fill="none" stroke="#f2eda1" stroke-width=".8"/><rect x="15.7" y="-21" width="29" height="20.5" rx="1.5" fill="none" stroke="#c4c6c4" stroke-width=".8"/><rect x="-4.1" y="-4.1" width="8.2" height="8.2" fill="#e3b72e"/><circle r="1.9" fill="#001023"/><circle cx="58.4" cy="0" r="3.05" fill="#001023" stroke="#e3b72e" stroke-width="2.3"/><text x="5.6" y="1.5" class="sl">RAW</text><text x="52.8" y="1.5" class="sl" text-anchor="end">PD3</text><circle cy="9.7" r="3.05" fill="#001023" stroke="#e3b72e" stroke-width="2.3"/><circle cx="58.4" cy="9.7" r="3.05" fill="#001023" stroke="#e3b72e" stroke-width="2.3"/><text x="5.6" y="11.2" class="sl">GND</text><text x="52.8" y="11.2" class="sl" text-anchor="end">PD2</text><circle cy="19.5" r="3.05" fill="#001023" stroke="#e3b72e" stroke-width="2.3"/><circle cx="58.4" cy="19.5" r="3.05" fill="#001023" stroke="#e3b72e" stroke-width="2.3"/><text x="5.6" y="21" class="sl">RST</text><text x="52.8" y="21" class="sl" text-anchor="end">GND</text><circle cy="29.2" r="3.05" fill="#001023" stroke="#e3b72e" stroke-width="2.3"/><circle cx="58.4" cy="29.2" r="3.05" fill="#001023" stroke="#e3b72e" stroke-width="2.3"/><text x="5.6" y="30.7" class="sl">VCC</text><text x="52.8" y="30.7" class="sl" text-anchor="end">GND</text><circle cy="39" r="3.05" fill="#001023" stroke="#e3b72e" stroke-width="2.3"/><circle cx="58.4" cy="39" r="3.05" fill="#001023" stroke="#e3b72e" stroke-width="2.3"/><text x="5.6" y="40.5" class="sl">PF4</text><text x="52.8" y="40.5" class="sl" text-anchor="end">PD1</text><circle cy="48.7" r="3.05" fill="#001023" stroke="#e3b72e" stroke-width="2.3"/><circle cx="58.4" cy="48.7" r="3.05" fill="#001023" stroke="#e3b72e" stroke-width="2.3"/><text x="5.6" y="50.2" class="sl">PF5</text><text x="52.8" y="50.2" class="sl" text-anchor="end">PD0</text><circle cy="58.4" r="3.05" fill="#001023" stroke="#e3b72e" stroke-width="2.3"/><circle cx="58.4" cy="58.4" r="3.05" fill="#001023" stroke="#e3b72e" stroke-width="2.3"/><text x="5.6" y="59.9" class="sl">PF6</text><text x="52.8" y="59.9" class="sl" text-anchor="end">PD4</text><circle cy="68.2" r="3.05" fill="#001023" stroke="#e3b72e" stroke-width="2.3"/><circle cx="58.4" cy="68.2" r="3.05" fill="#001023" stroke="#e3b72e" stroke-width="2.3"/><text x="5.6" y="69.7" class="sl">PF7</text><text x="52.8" y="69.7" class="sl" text-anchor="end">PC6</text><circle cy="77.9" r="3.05" fill="#001023" stroke="#e3b72e" stroke-width="2.3"/><circle cx="58.4" cy="77.9" r="3.05" fill="#001023" stroke="#e3b72e" stroke-width="2.3"/><text x="5.6" y="79.4" class="sl">PB1</text><text x="52.8" y="79.4" class="sl" text-anchor="end">PD7</text><circle cy="87.7" r="3.05" fill="#001023" stroke="#e3b72e" stroke-width="2.3"/><circle cx="58.4" cy="87.7" r="3.05" fill="#001023" stroke="#e3b72e" stroke-width="2.3"/><text x="5.6" y="89.2" class="sl">PB3</text><text x="52.8" y="89.2" class="sl" text-anchor="end">PE6</text><circle cy="97.4" r="3.05" fill="#001023" stroke="#e3b72e" stroke-width="2.3"/><circle cx="58.4" cy="97.4" r="3.05" fill="#001023" stroke="#e3b72e" stroke-width="2.3"/><text x="5.6" y="98.9" class="sl">PB2</text><text x="52.8" y="98.9" class="sl" text-anchor="end">PB4</text><circle cy="107.1" r="3.05" fill="#001023" stroke="#e3b72e" stroke-width="2.3"/><circle cx="58.4" cy="107.1" r="3.05" fill="#001023" stroke="#e3b72e" stroke-width="2.3"/><text x="5.6" y="108.6" class="sl">PB6</text><text x="52.8" y="108.6" class="sl" text-anchor="end">PB5</text><rect x="39.9" y="115.8" width="8.2" height="8.2" fill="#e3b72e"/><circle cx="44" cy="119.9" r="1.9" fill="#001023"/><circle cx="34.3" cy="119.9" r="3.1" fill="#001023" stroke="#e3b72e" stroke-width="2"/><circle cx="24.5" cy="119.9" r="3.1" fill="#001023" stroke="#e3b72e" stroke-width="2"/><circle cx="14.8" cy="119.9" r="3.1" fill="#001023" stroke="#e3b72e" stroke-width="2"/><text x="-21.7" y="128.4" font-size="5.2" fill="#d6d6d6" stroke="#d6d6d6" stroke-width=".2" text-anchor="middle" font-family="Liberation Sans,sans-serif" font-style="italic">OLED</text><g transform="translate(29.5,147.7)"><path d="M-5,-9 H5 A6,6 0 0 1 9.5,-4 V4 A6,6 0 0 1 5,9 H-5 A6,6 0 0 1 -9.5,4 V-4 A6,6 0 0 1 -5,-9Z" fill="none" stroke="#f2eda1" stroke-width=".8"/><rect x="-9" y="-15.5" width="3.6" height="7" fill="#c83434"/><rect x="5.4" y="-15.5" width="3.6" height="7" fill="#c83434"/><rect x="-9" y="8.5" width="3.6" height="7" fill="#c83434"/><rect x="5.4" y="8.5" width="3.6" height="7" fill="#c83434"/></g></g><path d="M203.7,426.4L186.8,460M203.7,491.5L186.8,525.1M203.7,556.6L186.8,590.2M203.7,621.7L186.8,655.3M272.7,426.4L255.8,460M272.7,491.5L255.8,525.1M272.7,556.6L255.8,590.2M272.7,621.7L255.8,655.3M341.7,405.9L324.8,439.5M341.7,471L324.8,504.6M341.7,536.1L324.8,569.7M341.7,601.2L324.8,634.8M341.7,666.3L324.8,699.9M410.7,397.2L393.8,430.8M410.7,462.3L393.8,495.9M410.7,527.4L393.8,561M410.7,592.5L393.8,626.1M410.7,657.6L393.8,691.2M479.7,405.9L462.8,439.5M479.7,471L462.8,504.6M479.7,536.1L462.8,569.7M479.7,601.2L462.8,634.8M479.7,666.3L462.8,699.9M548.7,416.4L531.8,450M548.7,481.5L531.8,515.1M548.7,546.6L531.8,580.2M548.7,611.7L531.8,645.3M661.8,351.7L670.4,388.3M703.6,401.6L712.3,438.2M745.5,451.4L754.1,488M787.3,501.3L796,537.9M707.9,299.3L716.5,335.9M749.7,349.2L758.4,385.8M791.6,399L800.2,435.6M833.4,448.9L842.1,485.5M875.3,498.8L883.9,535.4M755.2,248.3L763.8,284.9M797,298.1L805.7,334.8M838.8,348L847.5,384.6M880.7,397.9L889.3,434.5M922.5,447.8L931.2,484.4M813.6,210.6L822.3,247.2M855.4,260.5L864.1,297.1M897.3,310.3L905.9,346.9M939.1,360.2L947.8,396.8M981,410.1L989.6,446.7M879.6,181.9L888.3,218.5M921.5,231.8L930.1,268.4M963.3,281.7L972,318.3M1005.2,331.6L1013.8,368.2M932.5,137.6L941.1,174.2M974.3,187.5L983,224.1M1016.2,237.3L1024.8,273.9M1058,287.2L1066.7,323.8M559.3,693.4L534.8,721.9M610.2,680.4L630.9,711.8M795.6,655.8L768.3,681.6M819.7,559.9L837.6,593M159.4,417.1L159.4,612.4M228.4,417.1L228.4,612.4M297.4,396.6L297.4,657M366.4,387.9L366.4,648.3M435.4,396.6L435.4,657M504.4,407.1L504.4,602.4M165.9,459.8L226.5,459.6M165.9,524.9L226.5,524.7M165.9,590L226.5,589.8M165.9,655.1L226.5,654.9M234.9,459.8L295.6,439.1M234.9,524.9L295.6,504.2M234.9,590L295.6,569.3M234.9,655.1L295.6,634.4M303.9,439.3L364.6,430.4M303.9,504.4L364.6,495.5M303.9,569.5L364.6,560.6M303.9,634.6L364.6,625.7M303.9,699.7L364.6,690.8M372.9,430.6L433.6,439.1M372.9,495.7L433.6,504.2M372.9,560.8L433.6,569.3M372.9,625.9L433.6,634.4M372.9,691L433.6,699.5M441.9,439.3L502.6,449.6M441.9,504.4L502.6,514.7M441.9,569.5L502.6,579.8M441.9,634.6L502.6,644.9M621.9,373L747.4,522.7M668,320.6L835.4,520.1M715.2,269.6L882.6,469.1M773.7,231.9L941.1,431.4M839.7,203.3L965.3,352.9M892.6,158.9L1018.1,308.5M654.3,401.6L693.9,354.4M696.1,451.4L735.7,404.3M738,501.3L777.6,454.1M779.8,551.2L819.4,504M700.4,349.2L741.1,303.4M742.2,399L783,353.2M784.1,448.9L824.8,403.1M825.9,498.8L866.7,453M867.8,548.7L908.5,502.9M747.7,298.2L799.6,265.7M789.5,348L841.4,315.6M831.4,397.9L883.3,365.4M873.2,447.8L925.1,415.3M915,497.6L967,465.2M806.1,260.5L865.6,237M848,310.3L907.5,286.9M889.8,360.2L949.3,336.8M931.7,410.1L991.2,386.6M872.2,231.8L918.5,192.7M914,281.7L960.3,242.6M955.8,331.6L1002.2,292.4M997.7,381.4L1044,342.3M157.5,459.6L186.8,460M157.5,524.7L186.8,525.1M157.5,589.8L186.8,590.2M157.5,654.9L186.8,655.3M226.5,459.6L255.8,460M226.5,524.7L255.8,525.1M226.5,589.8L255.8,590.2M226.5,654.9L255.8,655.3M295.6,439.1L324.8,439.5M295.6,504.2L324.8,504.6M295.6,569.3L324.8,569.7M295.6,634.4L324.8,634.8M295.6,699.5L324.8,699.9M364.6,430.4L393.8,430.8M364.6,495.5L393.8,495.9M364.6,560.6L393.8,561M364.6,625.7L393.8,626.1M364.6,690.8L393.8,691.2M433.6,439.1L462.8,439.5M433.6,504.2L462.8,504.6M433.6,569.3L462.8,569.7M433.6,634.4L462.8,634.8M433.6,699.5L462.8,699.9M502.6,449.6L531.8,450M502.6,514.7L531.8,515.1M502.6,579.8L531.8,580.2M502.6,644.9L531.8,645.3M647.8,406.8L670.4,388.3M689.6,456.7L712.3,438.2M731.5,506.5L754.1,488M773.3,556.4L796,537.9M693.9,354.4L716.5,335.9M735.7,404.3L758.4,385.8M777.6,454.1L800.2,435.6M819.4,504L842.1,485.5M861.3,553.9L883.9,535.4M741.1,303.4L763.8,284.9M783,353.2L805.7,334.8M824.8,403.1L847.5,384.6M866.7,453L889.3,434.5M908.5,502.9L931.2,484.4M799.6,265.7L822.3,247.2M841.4,315.6L864.1,297.1M883.3,365.4L905.9,346.9M925.1,415.3L947.8,396.8M967,465.2L989.6,446.7M865.6,237L888.3,218.5M907.5,286.9L930.1,268.4M949.3,336.8L972,318.3M991.2,386.6L1013.8,368.2M918.5,192.7L941.1,174.2M960.3,242.6L983,224.1M1002.2,292.4L1024.8,273.9M1044,342.3L1066.7,323.8M506.5,714.4L534.8,721.9M615.9,736.9L630.9,711.8M740.9,671.2L768.3,681.6M820.5,616.7L837.6,593M504.4,407.1L621.9,373M510.9,449.8L660.2,580M548.7,481.5L651,583.3M502.6,514.7L594.5,528.1M502.6,579.8L601.1,546.4M502.6,644.9L607.8,564.7M433.6,699.5L614.4,583M548.7,546.6L666,553.8M435.4,657L659.4,535.5M366.4,648.3L662.7,544.7M297.4,657L611.1,573.8M228.4,612.4L604.5,555.5M159.4,612.4L366.4,583.2M159.4,547.3L297.4,526.8M228.4,547.3L435.4,591.9M297.4,591.9L607.8,564.7M157.5,654.9L597.8,537.2M364.6,690.8L632.7,590M518.6,673.6L601.1,546.4M580,714.1L652.7,517.2M534.8,721.9L615.9,736.9M506.5,714.4L462.8,699.9M610.2,680.4L653.4,624.8M502.6,449.6L587.8,509.8M591.1,518.9L645.2,602.2M584.5,500.6L658.7,597.3M647.8,406.8L632.7,462.3M689.6,456.7L636,471.5M731.5,506.5L646,498.9M773.3,556.4L652.7,517.2M861.3,553.9L659.4,535.5M747.4,522.7L649.4,508.1M835.4,520.1L656,526.4M882.6,469.1L662.7,544.7M965.3,352.9L607.8,564.7M1018.1,308.5L611.1,573.8M740.9,671.2L642.7,489.8M757.2,631.9L835.4,520.1M820.5,616.7L768.3,681.6M786.7,590.8L666,553.8M866.7,453L601.1,546.4M925.1,415.3L614.4,583M838.8,348L669.4,563M581.1,491.5L639.4,480.6M614.4,583L642.7,489.8M666.9,619.9L740.9,671.2" stroke="#00f0ff" stroke-opacity=".5" stroke-width=".95" fill="none"/><path d="M1163.5,769V826M1124,809.5H1186" stroke="#d8d8d8" stroke-width="1" fill="none"/></svg></div></div><div class="abs" style="left:1228px;top:93px;width:1px;height:735px;background:#3b3b3b"></div><div class="selbox" style="left:1189px;top:98px;width:30px;height:30px"></div><svg class="ic" style="left:1192px;top:101px;overflow:visible" width="24" height="24" viewBox="0 0 24 24"><path d="M6.5,2V19L10.7,15.3L13.6,22L16.6,20.7L13.7,14.3H19.5Z" fill="#ded3dd"/></svg><svg class="ic" style="left:1192px;top:132.4px;overflow:visible" width="24" height="24" viewBox="0 0 24 24"><path d="M2,1L22,23M22,3L2,22" stroke="#ded3dd" stroke-width="1.1"/><circle cx="12.3" cy="12.2" r="2.6" fill="#fff"/></svg><div class="hsep" style="left:1193px;top:164.8px;width:22px"></div><svg class="ic" style="left:1192px;top:173.4px;overflow:visible" width="24" height="24" viewBox="0 0 24 24"><path d="M.5,4.5H23.5V19.5H.5V14.5Q3,12 .5,9.5Z" fill="none" stroke="#ded3dd" stroke-width="1"/><rect x="3.0" y="1" width="4.8" height="5.8" fill="#42b8eb"/><rect x="3.0" y="17.2" width="4.8" height="5.8" fill="#42b8eb"/><rect x="9.8" y="1" width="4.8" height="5.8" fill="#42b8eb"/><rect x="9.8" y="17.2" width="4.8" height="5.8" fill="#42b8eb"/><rect x="16.7" y="1" width="4.8" height="5.8" fill="#42b8eb"/><rect x="16.7" y="17.2" width="4.8" height="5.8" fill="#42b8eb"/></svg><svg class="ic" style="left:1192px;top:205.7px;overflow:visible" width="24" height="24" viewBox="0 0 24 24"><path d="M2,22L7.5,10.5H17L22,1.5" fill="none" stroke="#42b8eb" stroke-width="2"/><path d="M27,19V26H20Z" fill="#e8e2e8"/></svg><svg class="ic" style="left:1192px;top:237.9px;overflow:visible" width="24" height="24" viewBox="0 0 24 24"><path d="M1,11.5Q1,15 3,15Q5,15 5,11V7.5Q5,4.5 7.5,4.5Q10,4.5 10,7.5V14Q10,17 12.3,17Q14.6,17 14.6,14V7.5Q14.6,4.5 17,4.5Q19.5,4.5 19.5,7.5V11Q19.5,15 21.5,15Q23.5,15 23.5,11.5" fill="none" stroke="#42b8eb" stroke-width="1.9"/><path d="M27,19V26H20Z" fill="#e8e2e8"/></svg><svg class="ic" style="left:1192px;top:269.7px;overflow:visible" width="24" height="24" viewBox="0 0 24 24"><circle cx="12" cy="12" r="7.3" fill="#f5a11a"/><circle cx="12" cy="12" r="3" fill="#f3ead8"/></svg><svg class="ic" style="left:1192px;top:302px;overflow:visible" width="24" height="24" viewBox="0 0 24 24"><path d="M1.5,22.5V10.5H8.5V2H22.5V22.5Z" fill="#2e9ad6"/><circle cx="17.3" cy="10.8" r="4.3" fill="#323232"/><path d="M17,10.8H23" stroke="#323232" stroke-width="3.6"/><circle cx="17.3" cy="10.8" r="2.6" fill="#fff"/><path d="M17.3,10.8H23" stroke="#fff" stroke-width="1.6"/></svg><svg class="ic" style="left:1192px;top:334.2px;overflow:visible" width="24" height="24" viewBox="0 0 24 24"><clipPath id="hc"><path d="M2,22V11.5H9V2.5H22V22Z"/></clipPath><path d="M2,22V11.5H9V2.5H22V22Z" fill="none" stroke="#ded3dd" stroke-width="1"/><path d="M28,12L12,-4M28,17L7,-4M28,22L2,-4M26,25L0,-1M21,25L-3,1M16,25L-3,6M11,25L-3,11M6,25L-3,16" stroke="#ded3dd" stroke-width="2.2" clip-path="url(#hc)"/></svg><div class="hsep" style="left:1193px;top:365.8px;width:22px"></div><svg class="ic" style="left:1192px;top:374.4px;overflow:visible" width="24" height="24" viewBox="0 0 24 24"><path d="M2,21.5L22,3" stroke="#ded3dd" stroke-width="1.6"/></svg><svg class="ic" style="left:1192px;top:406.6px;overflow:visible" width="24" height="24" viewBox="0 0 24 24"><path d="M3,23Q3,4 21,2.5" fill="none" stroke="#ded3dd" stroke-width="1.6"/></svg><svg class="ic" style="left:1192px;top:438.9px;overflow:visible" width="24" height="24" viewBox="0 0 24 24"><rect x="2.5" y="3" width="19" height="18" fill="#9f9ba0" stroke="#ded3dd" stroke-width="1.4"/></svg><svg class="ic" style="left:1192px;top:470.8px;overflow:visible" width="24" height="24" viewBox="0 0 24 24"><circle cx="12" cy="12" r="9" fill="#9f9ba0" stroke="#ded3dd" stroke-width="1.4"/></svg><svg class="ic" style="left:1192px;top:503px;overflow:visible" width="24" height="24" viewBox="0 0 24 24"><path d="M2.5,3L21.5,6.5L19,21L3,18.5L9,11Z" fill="#9f9ba0" stroke="#ded3dd" stroke-width="1.4" stroke-linejoin="round"/></svg><svg class="ic" style="left:1192px;top:535.2px;overflow:visible" width="24" height="24" viewBox="0 0 24 24"><rect x="1.5" y="2" width="21" height="20" rx="2.5" fill="#ded3dd"/><path d="M3.5,19L9.5,10.5L13.5,15.5L16,13L20.5,19Z" fill="#3a3a3a"/><circle cx="16.5" cy="7.5" r="2" fill="#3a3a3a"/></svg><svg class="ic" style="left:1192px;top:567px;overflow:visible" width="24" height="24" viewBox="0 0 24 24"><path d="M3,2.5H21V6H14V22H10V6H3Z" fill="#ded3dd"/></svg><svg class="ic" style="left:1192px;top:599.2px;overflow:visible" width="24" height="24" viewBox="0 0 24 24"><rect x="2.5" y="4" width="19" height="15.5" fill="#8e8a8f" stroke="#6e6a6f" stroke-width="1"/><path d="M5.5,8H18.5M5.5,11.7H18.5M5.5,15.4H14" stroke="#efe9ef" stroke-width="1.4"/></svg><svg class="ic" style="left:1192px;top:633px;overflow:visible" width="24" height="24" viewBox="0 0 24 24"><path d="M5.5,18L16.5,5.5" stroke="#ded3dd" stroke-width="1.1"/><path d="M1,14L8,20.5M13,2L20,8.5" stroke="#ded3dd" stroke-width="1.1"/><circle cx="8" cy="21" r="2.5" fill="#42b8eb"/><circle cx="20.5" cy="8" r="2.5" fill="#42b8eb"/><path d="M27,19V26H20Z" fill="#e8e2e8"/></svg><svg class="ic" style="left:1192px;top:664.5px;overflow:visible" width="24" height="24" viewBox="0 0 24 24"><path d="M3,1V17L7,13.5L9.7,19.5L12.3,18.3L9.7,12.5H15Z" fill="#b9b0b8"/><circle cx="16" cy="16.5" r="6" fill="#f2647e"/><path d="M13.5,14L18.5,19M18.5,14L13.5,19" stroke="#fff" stroke-width="1.8"/></svg><div class="hsep" style="left:1193px;top:695.3px;width:22px"></div><svg class="ic" style="left:1192px;top:703.7px;overflow:visible" width="24" height="24" viewBox="0 0 24 24"><path d="M3.5,3V21H22" fill="none" stroke="#ded3dd" stroke-width="1"/><path d="M3.5,1L1.7,4H5.3ZM24,21L21,19.2V22.8Z" fill="#ded3dd"/><circle cx="13.5" cy="9.5" r="5" fill="#6a666b"/><path d="M13.5,2V17M6,9.5H21" stroke="#fff" stroke-width="2"/><path d="M27,20V27H20Z" fill="#e8e2e8"/></svg><svg class="ic" style="left:1192px;top:736.8px;overflow:visible" width="24" height="24" viewBox="0 0 24 24"><g transform="rotate(-40 12 12)"><rect x="0" y="8" width="24" height="8.5" rx="1" fill="none" stroke="#ded3dd" stroke-width="1.7"/><path d="M4.5,8.5V12M8.5,8.5V13.5M12.5,8.5V12M16.5,8.5V13.5M20,8.5V12" stroke="#ded3dd" stroke-width="1.3"/></g></svg><div class="hdr" style="top:93px">Appearance</div><div class="abs" style="left:1229.5px;top:134px;width:190px;height:476.5px;background:#3a3a3a;border:1px solid #484848;border-radius:6px"></div><div class="abs" style="left:1234px;top:123px;width:170px;height:21.5px;border-radius:6px;background:#3d3d3d;border:1px solid #4e4e4e"></div><div class="abs" style="left:1234px;top:123.5px;width:57px;height:20.5px;border-radius:5.5px;background:#696969"></div><div class="vsep" style="left:1354.5px;top:128px;height:12px;background:#4c4c4c"></div><div class="t" style="left:1246px;top:127.5px;font-size:12px;letter-spacing:-.25px;color:#f0f0f0">Layers</div><div class="t" style="left:1303px;top:127.5px;font-size:12px;color:#f0f0f0">Objects</div><div class="t" style="left:1366px;top:127.5px;font-size:12px;color:#f0f0f0">Nets</div><div class="row" style="top:151px"><span class="sw" style="background:#c83434"></span><svg style="position:absolute;left:37px;top:0" width="20" height="18" viewBox="0 0 20 18"><circle cx="10" cy="9" r="8.5" fill="#3c3c3c"/><path d="M4.2,9Q10.3,3.4 16.4,9Q10.3,14.6 4.2,9Z" fill="none" stroke="#d8ccd7" stroke-width="1.3"/><circle cx="10.3" cy="9" r="2.7" fill="#d8ccd7"/><circle cx="10.3" cy="9" r="1.2" fill="#3c3c3c"/></svg><span class="ln">F.Cu</span></div><div class="row" style="top:169px;background:#4b4b4b"><svg style="position:absolute;left:6px;top:4px" width="7" height="10" viewBox="0 0 7 10"><path d="M0,0L6.5,5L0,10Z" fill="#3d44ff"/></svg><span class="sw" style="background:#4d7fc4"></span><svg style="position:absolute;left:37px;top:0" width="20" height="18" viewBox="0 0 20 18"><circle cx="10" cy="9" r="8.5" fill="#3c3c3c"/><path d="M4.2,9Q10.3,3.4 16.4,9Q10.3,14.6 4.2,9Z" fill="none" stroke="#d8ccd7" stroke-width="1.3"/><circle cx="10.3" cy="9" r="2.7" fill="#d8ccd7"/><circle cx="10.3" cy="9" r="1.2" fill="#3c3c3c"/></svg><span class="ln">B.Cu</span></div><div class="row" style="top:187px"><span class="sw" style="background:#840084"></span><svg style="position:absolute;left:37px;top:0" width="20" height="18" viewBox="0 0 20 18"><circle cx="10" cy="9" r="8.5" fill="#3c3c3c"/><path d="M4.2,9Q10.3,3.4 16.4,9Q10.3,14.6 4.2,9Z" fill="none" stroke="#d8ccd7" stroke-width="1.3"/><circle cx="10.3" cy="9" r="2.7" fill="#d8ccd7"/><circle cx="10.3" cy="9" r="1.2" fill="#3c3c3c"/></svg><span class="ln">F.Adhesive</span></div><div class="row" style="top:205px"><span class="sw" style="background:#000084"></span><svg style="position:absolute;left:37px;top:0" width="20" height="18" viewBox="0 0 20 18"><circle cx="10" cy="9" r="8.5" fill="#3c3c3c"/><path d="M4.2,9Q10.3,3.4 16.4,9Q10.3,14.6 4.2,9Z" fill="none" stroke="#d8ccd7" stroke-width="1.3"/><circle cx="10.3" cy="9" r="2.7" fill="#d8ccd7"/><circle cx="10.3" cy="9" r="1.2" fill="#3c3c3c"/></svg><span class="ln">B.Adhesive</span></div><div class="row" style="top:223px"><span class="sw" style="background:#b4a09a"></span><svg style="position:absolute;left:37px;top:0" width="20" height="18" viewBox="0 0 20 18"><circle cx="10" cy="9" r="8.5" fill="#3c3c3c"/><path d="M4.2,9Q10.3,3.4 16.4,9Q10.3,14.6 4.2,9Z" fill="none" stroke="#d8ccd7" stroke-width="1.3"/><circle cx="10.3" cy="9" r="2.7" fill="#d8ccd7"/><circle cx="10.3" cy="9" r="1.2" fill="#3c3c3c"/></svg><span class="ln">F.Paste</span></div><div class="row" style="top:241px"><span class="sw" style="background:#00c2c2"></span><svg style="position:absolute;left:37px;top:0" width="20" height="18" viewBox="0 0 20 18"><circle cx="10" cy="9" r="8.5" fill="#3c3c3c"/><path d="M4.2,9Q10.3,3.4 16.4,9Q10.3,14.6 4.2,9Z" fill="none" stroke="#d8ccd7" stroke-width="1.3"/><circle cx="10.3" cy="9" r="2.7" fill="#d8ccd7"/><circle cx="10.3" cy="9" r="1.2" fill="#3c3c3c"/></svg><span class="ln">B.Paste</span></div><div class="row" style="top:259px"><span class="sw" style="background:#f2eda1"></span><svg style="position:absolute;left:37px;top:0" width="20" height="18" viewBox="0 0 20 18"><circle cx="10" cy="9" r="8.5" fill="#3c3c3c"/><path d="M4.2,9Q10.3,3.4 16.4,9Q10.3,14.6 4.2,9Z" fill="none" stroke="#d8ccd7" stroke-width="1.3"/><circle cx="10.3" cy="9" r="2.7" fill="#d8ccd7"/><circle cx="10.3" cy="9" r="1.2" fill="#3c3c3c"/></svg><span class="ln">F.Silkscreen</span></div><div class="row" style="top:277px"><span class="sw" style="background:#e8b2a7"></span><svg style="position:absolute;left:37px;top:0" width="20" height="18" viewBox="0 0 20 18"><circle cx="10" cy="9" r="8.5" fill="#3c3c3c"/><path d="M4.2,9Q10.3,3.4 16.4,9Q10.3,14.6 4.2,9Z" fill="none" stroke="#d8ccd7" stroke-width="1.3"/><circle cx="10.3" cy="9" r="2.7" fill="#d8ccd7"/><circle cx="10.3" cy="9" r="1.2" fill="#3c3c3c"/></svg><span class="ln">B.Silkscreen</span></div><div class="row" style="top:295px"><span class="sw" style="background:#5a3878"></span><svg style="position:absolute;left:37px;top:0" width="20" height="18" viewBox="0 0 20 18"><circle cx="10" cy="9" r="8.5" fill="#3c3c3c"/><path d="M4.2,9Q10.3,3.4 16.4,9Q10.3,14.6 4.2,9Z" fill="none" stroke="#d8ccd7" stroke-width="1.3"/><circle cx="10.3" cy="9" r="2.7" fill="#d8ccd7"/><circle cx="10.3" cy="9" r="1.2" fill="#3c3c3c"/></svg><span class="ln">F.Mask</span></div><div class="row" style="top:313px"><span class="sw" style="background:#027b7b"></span><svg style="position:absolute;left:37px;top:0" width="20" height="18" viewBox="0 0 20 18"><circle cx="10" cy="9" r="8.5" fill="#3c3c3c"/><path d="M4.2,9Q10.3,3.4 16.4,9Q10.3,14.6 4.2,9Z" fill="none" stroke="#d8ccd7" stroke-width="1.3"/><circle cx="10.3" cy="9" r="2.7" fill="#d8ccd7"/><circle cx="10.3" cy="9" r="1.2" fill="#3c3c3c"/></svg><span class="ln">B.Mask</span></div><div class="row" style="top:331px"><span class="sw" style="background:#c2c2c2"></span><svg style="position:absolute;left:37px;top:0" width="20" height="18" viewBox="0 0 20 18"><circle cx="10" cy="9" r="8.5" fill="#3c3c3c"/><path d="M4.2,9Q10.3,3.4 16.4,9Q10.3,14.6 4.2,9Z" fill="none" stroke="#d8ccd7" stroke-width="1.3"/><circle cx="10.3" cy="9" r="2.7" fill="#d8ccd7"/><circle cx="10.3" cy="9" r="1.2" fill="#3c3c3c"/></svg><span class="ln">User.Drawings</span></div><div class="row" style="top:349px"><span class="sw" style="background:#5994dc"></span><svg style="position:absolute;left:37px;top:0" width="20" height="18" viewBox="0 0 20 18"><circle cx="10" cy="9" r="8.5" fill="#3c3c3c"/><path d="M4.2,9Q10.3,3.4 16.4,9Q10.3,14.6 4.2,9Z" fill="none" stroke="#d8ccd7" stroke-width="1.3"/><circle cx="10.3" cy="9" r="2.7" fill="#d8ccd7"/><circle cx="10.3" cy="9" r="1.2" fill="#3c3c3c"/></svg><span class="ln">User.Comments</span></div><div class="row" style="top:367px"><span class="sw" style="background:#b4dbd2"></span><svg style="position:absolute;left:37px;top:0" width="20" height="18" viewBox="0 0 20 18"><circle cx="10" cy="9" r="8.5" fill="#3c3c3c"/><path d="M4.2,9Q10.3,3.4 16.4,9Q10.3,14.6 4.2,9Z" fill="none" stroke="#d8ccd7" stroke-width="1.3"/><circle cx="10.3" cy="9" r="2.7" fill="#d8ccd7"/><circle cx="10.3" cy="9" r="1.2" fill="#3c3c3c"/></svg><span class="ln">User.Eco1</span></div><div class="row" style="top:385px"><span class="sw" style="background:#d8c852"></span><svg style="position:absolute;left:37px;top:0" width="20" height="18" viewBox="0 0 20 18"><circle cx="10" cy="9" r="8.5" fill="#3c3c3c"/><path d="M4.2,9Q10.3,3.4 16.4,9Q10.3,14.6 4.2,9Z" fill="none" stroke="#d8ccd7" stroke-width="1.3"/><circle cx="10.3" cy="9" r="2.7" fill="#d8ccd7"/><circle cx="10.3" cy="9" r="1.2" fill="#3c3c3c"/></svg><span class="ln">User.Eco2</span></div><div class="row" style="top:403px"><span class="sw" style="background:#d0d2cd"></span><svg style="position:absolute;left:37px;top:0" width="20" height="18" viewBox="0 0 20 18"><circle cx="10" cy="9" r="8.5" fill="#3c3c3c"/><path d="M4.2,9Q10.3,3.4 16.4,9Q10.3,14.6 4.2,9Z" fill="none" stroke="#d8ccd7" stroke-width="1.3"/><circle cx="10.3" cy="9" r="2.7" fill="#d8ccd7"/><circle cx="10.3" cy="9" r="1.2" fill="#3c3c3c"/></svg><span class="ln">Edge.Cuts</span></div><div class="row" style="top:421px"><span class="sw" style="background:#ff26e2"></span><svg style="position:absolute;left:37px;top:0" width="20" height="18" viewBox="0 0 20 18"><circle cx="10" cy="9" r="8.5" fill="#3c3c3c"/><path d="M4.2,9Q10.3,3.4 16.4,9Q10.3,14.6 4.2,9Z" fill="none" stroke="#d8ccd7" stroke-width="1.3"/><circle cx="10.3" cy="9" r="2.7" fill="#d8ccd7"/><circle cx="10.3" cy="9" r="1.2" fill="#3c3c3c"/></svg><span class="ln">Margin</span></div><div class="row" style="top:439px"><span class="sw" style="background:#ff26e2"></span><svg style="position:absolute;left:37px;top:0" width="20" height="18" viewBox="0 0 20 18"><circle cx="10" cy="9" r="8.5" fill="#3c3c3c"/><path d="M4.2,9Q10.3,3.4 16.4,9Q10.3,14.6 4.2,9Z" fill="none" stroke="#d8ccd7" stroke-width="1.3"/><circle cx="10.3" cy="9" r="2.7" fill="#d8ccd7"/><circle cx="10.3" cy="9" r="1.2" fill="#3c3c3c"/></svg><span class="ln">F.Courtyard</span></div><div class="row" style="top:457px"><span class="sw" style="background:#26e9ff"></span><svg style="position:absolute;left:37px;top:0" width="20" height="18" viewBox="0 0 20 18"><circle cx="10" cy="9" r="8.5" fill="#3c3c3c"/><path d="M4.2,9Q10.3,3.4 16.4,9Q10.3,14.6 4.2,9Z" fill="none" stroke="#d8ccd7" stroke-width="1.3"/><circle cx="10.3" cy="9" r="2.7" fill="#d8ccd7"/><circle cx="10.3" cy="9" r="1.2" fill="#3c3c3c"/></svg><span class="ln">B.Courtyard</span></div><div class="row" style="top:475px"><span class="sw" style="background:#afafaf"></span><svg style="position:absolute;left:37px;top:0" width="20" height="18" viewBox="0 0 20 18"><circle cx="10" cy="9" r="8.5" fill="#3c3c3c"/><path d="M4.2,9Q10.3,3.4 16.4,9Q10.3,14.6 4.2,9Z" fill="none" stroke="#d8ccd7" stroke-width="1.3"/><circle cx="10.3" cy="9" r="2.7" fill="#d8ccd7"/><circle cx="10.3" cy="9" r="1.2" fill="#3c3c3c"/></svg><span class="ln">F.Fab</span></div><div class="row" style="top:493px"><span class="sw" style="background:#585d84"></span><svg style="position:absolute;left:37px;top:0" width="20" height="18" viewBox="0 0 20 18"><circle cx="10" cy="9" r="8.5" fill="#3c3c3c"/><path d="M4.2,9Q10.3,3.4 16.4,9Q10.3,14.6 4.2,9Z" fill="none" stroke="#d8ccd7" stroke-width="1.3"/><circle cx="10.3" cy="9" r="2.7" fill="#d8ccd7"/><circle cx="10.3" cy="9" r="1.2" fill="#3c3c3c"/></svg><span class="ln">B.Fab</span></div><svg class="abs" style="left:1243px;top:594px" width="8" height="10" viewBox="0 0 8 10"><path d="M0.5,0.5L6.5,5L0.5,9.5Z" fill="#f0f0f0"/></svg><div class="t" style="left:1250px;top:592.5px;font-size:12.4px;color:#f0f0f0">Layer Display Options</div><div class="t" style="left:1235px;top:612.5px;font-size:12.75px;color:#f0f0f0">Presets (Ctrl+Tab):</div><div class="combo" style="left:1235px;top:628px;width:166px;">All Layers<span class="step"><svg width="16" height="16" viewBox="0 0 16 16" style="position:absolute;left:0;top:0"><path d="M4.8,6.3L8,3.2L11.2,6.3M4.8,9.7L8,12.8L11.2,9.7" fill="none" stroke="#fff" stroke-width="1.5" stroke-linecap="round" stroke-linejoin="round"/></svg></span></div><div class="t" style="left:1235px;top:653.5px;font-size:12.85px;color:#f0f0f0">Viewports (Option+Tab):</div><div class="combo" style="left:1235px;top:669px;width:166px;"><span style="position:absolute;left:8px;top:9.5px;width:138px;height:1px;background:#9a9a9a"></span><span class="step"><svg width="16" height="16" viewBox="0 0 16 16" style="position:absolute;left:0;top:0"><path d="M4.8,6.3L8,3.2L11.2,6.3M4.8,9.7L8,12.8L11.2,9.7" fill="none" stroke="#fff" stroke-width="1.5" stroke-linecap="round" stroke-linejoin="round"/></svg></span></div><div class="hdr" style="top:705px">Selection Filter</div><span class="cb" style="left:1232.7px;top:727.8px"><svg width="14" height="14" viewBox="0 0 14 14" style="position:absolute;left:0;top:0"><path d="M3.4,7.3L6,10L10.7,3.9" fill="none" stroke="#fff" stroke-width="1.8" stroke-linecap="round" stroke-linejoin="round"/></svg></span><span class="cl" style="left:1253px;top:728.9px">All items</span><span class="cb" style="left:1332.8px;top:727.8px"><svg width="14" height="14" viewBox="0 0 14 14" style="position:absolute;left:0;top:0"><path d="M3.4,7.3L6,10L10.7,3.9" fill="none" stroke="#fff" stroke-width="1.8" stroke-linecap="round" stroke-linejoin="round"/></svg></span><span class="cl" style="left:1353px;top:728.9px">Locked items</span><span class="cb" style="left:1232.7px;top:743.8px"><svg width="14" height="14" viewBox="0 0 14 14" style="position:absolute;left:0;top:0"><path d="M3.4,7.3L6,10L10.7,3.9" fill="none" stroke="#fff" stroke-width="1.8" stroke-linecap="round" stroke-linejoin="round"/></svg></span><span class="cl" style="left:1253px;top:744.9px">Footprints</span><span class="cb" style="left:1332.8px;top:743.8px"><svg width="14" height="14" viewBox="0 0 14 14" style="position:absolute;left:0;top:0"><path d="M3.4,7.3L6,10L10.7,3.9" fill="none" stroke="#fff" stroke-width="1.8" stroke-linecap="round" stroke-linejoin="round"/></svg></span><span class="cl" style="left:1353px;top:744.9px">Text</span><span class="cb" style="left:1232.7px;top:759.8px"><svg width="14" height="14" viewBox="0 0 14 14" style="position:absolute;left:0;top:0"><path d="M3.4,7.3L6,10L10.7,3.9" fill="none" stroke="#fff" stroke-width="1.8" stroke-linecap="round" stroke-linejoin="round"/></svg></span><span class="cl" style="left:1253px;top:760.9px">Tracks</span><span class="cb" style="left:1332.8px;top:759.8px"><svg width="14" height="14" viewBox="0 0 14 14" style="position:absolute;left:0;top:0"><path d="M3.4,7.3L6,10L10.7,3.9" fill="none" stroke="#fff" stroke-width="1.8" stroke-linecap="round" stroke-linejoin="round"/></svg></span><span class="cl" style="left:1353px;top:760.9px">Vias</span><span class="cb" style="left:1232.7px;top:775.9px"><svg width="14" height="14" viewBox="0 0 14 14" style="position:absolute;left:0;top:0"><path d="M3.4,7.3L6,10L10.7,3.9" fill="none" stroke="#fff" stroke-width="1.8" stroke-linecap="round" stroke-linejoin="round"/></svg></span><span class="cl" style="left:1253px;top:777.0px">Pads</span><span class="cb" style="left:1332.8px;top:775.9px"><svg width="14" height="14" viewBox="0 0 14 14" style="position:absolute;left:0;top:0"><path d="M3.4,7.3L6,10L10.7,3.9" fill="none" stroke="#fff" stroke-width="1.8" stroke-linecap="round" stroke-linejoin="round"/></svg></span><span class="cl" style="left:1353px;top:777.0px">Graphics</span><span class="cb" style="left:1232.7px;top:791.9px"><svg width="14" height="14" viewBox="0 0 14 14" style="position:absolute;left:0;top:0"><path d="M3.4,7.3L6,10L10.7,3.9" fill="none" stroke="#fff" stroke-width="1.8" stroke-linecap="round" stroke-linejoin="round"/></svg></span><span class="cl" style="left:1253px;top:793.0px">Zones</span><span class="cb" style="left:1332.8px;top:791.9px"><svg width="14" height="14" viewBox="0 0 14 14" style="position:absolute;left:0;top:0"><path d="M3.4,7.3L6,10L10.7,3.9" fill="none" stroke="#fff" stroke-width="1.8" stroke-linecap="round" stroke-linejoin="round"/></svg></span><span class="cl" style="left:1353px;top:793.0px">Rule Areas</span><span class="cb" style="left:1232.7px;top:807.9px"><svg width="14" height="14" viewBox="0 0 14 14" style="position:absolute;left:0;top:0"><path d="M3.4,7.3L6,10L10.7,3.9" fill="none" stroke="#fff" stroke-width="1.8" stroke-linecap="round" stroke-linejoin="round"/></svg></span><span class="cl" style="left:1253px;top:809.0px">Dimensions</span><span class="cb" style="left:1332.8px;top:807.9px"><svg width="14" height="14" viewBox="0 0 14 14" style="position:absolute;left:0;top:0"><path d="M3.4,7.3L6,10L10.7,3.9" fill="none" stroke="#fff" stroke-width="1.8" stroke-linecap="round" stroke-linejoin="round"/></svg></span><span class="cl" style="left:1353px;top:809.0px">Other items</span><div class="st" style="left:8px;top:832px">Pads</div><div class="st" style="left:8px;top:848px">858</div><div class="st" style="left:64px;top:832px">Vias</div><div class="st" style="left:64px;top:848px">0</div><div class="st" style="left:117px;top:832px">Track Segments</div><div class="st" style="left:117px;top:848px">0</div><div class="st" style="left:232px;top:832px">Nets</div><div class="st" style="left:232px;top:848px">80</div><div class="st" style="left:287px;top:832px">Unrouted</div><div class="st" style="left:287px;top:848px">416</div><div class="abs" style="left:0;top:860.5px;width:1406px;height:23.5px;background:linear-gradient(#333,#2c2c2c)"></div><div class="abs" style="left:0;top:859.6px;width:1406px;height:1.2px;background:#121212"></div><div class="sb" style="left:409px">Z 1.07</div><div class="sb" style="left:481px">X 322.5800  Y 200.6600</div><div class="sb" style="left:638px">dx 322.5800  dy 200.6600  dist 379.8977</div><div class="sb" style="left:889px">grid X 2.5400  Y 2.5400</div><div class="sb" style="left:1069px">mm</div></body></html>
